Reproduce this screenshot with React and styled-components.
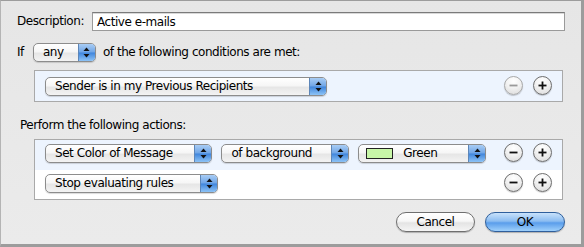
import React from "react";
import styled, { createGlobalStyle } from "styled-components";

const GlobalStyle = createGlobalStyle`
  html, body {
    margin: 0;
    padding: 0;
    background: #e8e8e8;
  }
  body {
    font-family: "DejaVu Sans", "Liberation Sans", sans-serif;
    font-size: 12px;
    letter-spacing: -0.45px;
    color: #000;
  }
`;

const Sheet = styled.div`
  width: 584px;
  height: 247px;
  box-sizing: border-box;
  border-top: 1px solid #9c9c9c;
  border-left: 1px solid #b4b4b4;
  border-right: 3px solid #9c9c9c;
  border-bottom: 3px solid #9c9c9c;
  background: linear-gradient(#e6e6e6, #ebebeb);
  padding: 11px 16px 0 16px;
  display: flex;
  flex-direction: column;
`;

const Row = styled.div`
  display: flex;
  align-items: center;
  gap: ${(p) => p.gap || 0}px;
  margin-top: ${(p) => p.top || 0}px;
  margin-left: ${(p) => p.indent || 0}px;
`;

const Label = styled.span`
  white-space: nowrap;
  line-height: 19px;
`;

const TextField = styled.div`
  flex: 1;
  height: 19px;
  box-sizing: border-box;
  background: #fff;
  border: 1px solid #9a9a9a;
  border-top-color: #7a7a7a;
  box-shadow: inset 0 1px 0 #d8d8d8;
  padding: 1px 4px;
  line-height: 16px;
`;

const PopupBox = styled.div`
  position: relative;
  width: ${(p) => p.w}px;
  height: 19px;
  box-sizing: border-box;
  border: 1px solid #8c8c8c;
  border-radius: 5px;
  background: linear-gradient(#ffffff 0%, #f6f6f6 45%, #e6e6e6 55%, #f3f3f3 100%);
  box-shadow: 0 1px 1px rgba(0, 0, 0, 0.15);
  display: flex;
  align-items: center;
  overflow: hidden;
`;

const PopupText = styled.span`
  flex: 1;
  padding-left: 9px;
  white-space: nowrap;
  line-height: 17px;
`;

const Cap = styled.div`
  width: 16px;
  height: 100%;
  border-left: 1px solid #5d86b8;
  background: linear-gradient(#a9cdf5 0%, #6fa5e6 48%, #3f85dc 52%, #8dc3f6 100%);
  display: flex;
  align-items: center;
  justify-content: center;
`;

const Swatch = styled.span`
  width: 27px;
  height: 11px;
  box-sizing: border-box;
  border: 1px solid #222;
  background: #c8f7a8;
  margin-left: 7px;
  margin-right: 1px;
`;

const Arrows = () => (
  <svg width="7" height="11" viewBox="0 0 7 11">
    <path d="M3.5 0.5 L6.5 4 L0.5 4 Z" fill="#111" />
    <path d="M3.5 10.5 L6.5 7 L0.5 7 Z" fill="#111" />
  </svg>
);

const Popup = ({ w, children, swatch }) => (
  <PopupBox w={w}>
    {swatch && <Swatch />}
    <PopupText>{children}</PopupText>
    <Cap>
      <Arrows />
    </Cap>
  </PopupBox>
);

const RuleBox = styled.div`
  margin-top: ${(p) => p.top || 0}px;
  margin-left: 17px;
  width: 529px;
  box-sizing: border-box;
  border: 1px solid #a9a9a9;
  background: #fff;
  display: flex;
  flex-direction: column;
`;

const RuleRow = styled.div`
  height: ${(p) => p.h}px;
  box-sizing: border-box;
  background: ${(p) => (p.tinted ? "#edf4fe" : "#ffffff")};
  padding: ${(p) => p.padTop}px 10px 0 10px;
  display: flex;
  align-items: flex-start;
  gap: 9px;
`;

const Spacer = styled.div`
  flex: 1;
`;

const RoundGroup = styled.div`
  display: flex;
  gap: 10px;
  margin-top: -1px;
`;

const RoundButton = styled.div`
  width: 19px;
  height: 19px;
  box-sizing: border-box;
  border-radius: 50%;
  border: 1px solid ${(p) => (p.disabled ? "#a8a8a8" : "#6e6e6e")};
  background: radial-gradient(circle at 50% 25%, #ffffff 0%, #f2f2f2 45%, #d9d9d9 100%);
  box-shadow: 0 1px 1px rgba(0, 0, 0, 0.2);
  display: flex;
  align-items: center;
  justify-content: center;
`;

const Sign = ({ plus, disabled }) => (
  <svg width="9" height="9" viewBox="0 0 9 9">
    <rect x="0.5" y="3.6" width="8" height="1.8" fill={disabled ? "#9a9a9a" : "#111"} />
    {plus && <rect x="3.6" y="0.5" width="1.8" height="8" fill="#111" />}
  </svg>
);

const Footer = styled.div`
  margin-top: 12px;
  display: flex;
  justify-content: flex-end;
  gap: 10px;
`;

const PushButton = styled.div`
  width: ${(p) => p.w}px;
  height: 20px;
  box-sizing: border-box;
  border-radius: 10px;
  border: 1px solid ${(p) => (p.primary ? "#2f5f9c" : "#6f6f6f")};
  background: ${(p) =>
    p.primary
      ? "linear-gradient(#c9e2fb 0%, #8cbdf1 45%, #5a9deb 55%, #9fd0fb 100%)"
      : "linear-gradient(#ffffff 0%, #f7f7f7 45%, #e4e4e4 55%, #f5f5f5 100%)"};
  box-shadow: 0 1px 1px rgba(0, 0, 0, 0.25);
  display: flex;
  align-items: center;
  justify-content: center;
  line-height: 18px;
`;

export default function App() {
  return (
    <>
      <GlobalStyle />
      <Sheet>
        <Row gap={8}>
          <Label>Description:</Label>
          <TextField>Active e-mails</TextField>
        </Row>
        <Row top={12} gap={9}>
          <Label>If</Label>
          <Popup w={63}>any</Popup>
          <Label style={{ marginLeft: -2 }}>of the following conditions are met:</Label>
        </Row>
        <RuleBox top={8}>
          <RuleRow h={30} padTop={6} tinted>
            <Popup w={282}>Sender is in my Previous Recipients</Popup>
            <Spacer />
            <RoundGroup>
              <RoundButton disabled>
                <Sign disabled />
              </RoundButton>
              <RoundButton>
                <Sign plus />
              </RoundButton>
            </RoundGroup>
          </RuleRow>
        </RuleBox>
        <Row top={14} indent={3}>
          <Label>Perform the following actions:</Label>
        </Row>
        <RuleBox top={4}>
          <RuleRow h={30} padTop={4} tinted>
            <Popup w={173}>Set Color of Message</Popup>
            <Popup w={132}>of background</Popup>
            <Popup w={132} swatch>
              Green
            </Popup>
            <Spacer />
            <RoundGroup>
              <RoundButton>
                <Sign />
              </RoundButton>
              <RoundButton>
                <Sign plus />
              </RoundButton>
            </RoundGroup>
          </RuleRow>
          <RuleRow h={29} padTop={4}>
            <Popup w={173}>Stop evaluating rules</Popup>
            <Spacer />
            <RoundGroup>
              <RoundButton>
                <Sign />
              </RoundButton>
              <RoundButton>
                <Sign plus />
              </RoundButton>
            </RoundGroup>
          </RuleRow>
        </RuleBox>
        <Footer>
          <PushButton w={79}>Cancel</PushButton>
          <PushButton w={80} primary>
            OK
          </PushButton>
        </Footer>
      </Sheet>
    </>
  );
}
